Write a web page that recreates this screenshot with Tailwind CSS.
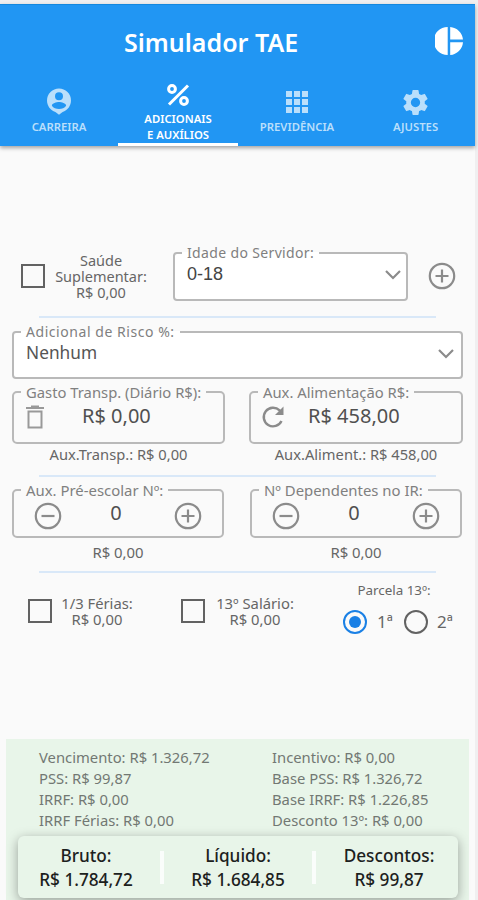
<!DOCTYPE html>
<html lang="pt-BR">
<head>
  <meta charset="UTF-8" />
  <meta name="viewport" content="width=device-width, initial-scale=1.0"/>
  <title>Simulador TAE</title>
  <script src="https://cdn.jsdelivr.net/npm/@tailwindcss/browser@4"></script>
</head>
<body class="w-[478px] h-[900px] overflow-hidden bg-[#f0eff0] pt-1 pr-[3px] font-['Noto_Sans','Open_Sans',sans-serif] text-[#666]">
<div class="h-[896px] bg-[#fafafa] flex flex-col">

  <header class="h-[142px] shrink-0 bg-[#2196f3] border-t border-[#1488df] shadow-[0_2px_4px_rgba(0,0,0,0.35)] text-white flex flex-col">
    <div class="h-[75px] flex items-center pl-[124px] pr-3 justify-between">
      <h1 class="text-[25px] font-semibold whitespace-nowrap">Simulador TAE</h1>
      <svg class="w-[28px] h-[28px] -mt-[3px]" viewBox="0 0 28 28" fill="currentColor">
        <path d="M12.700 0v28A14 14 0 0 1 12.700 0zM15.200 0A14 14 0 0 1 28 12.500H15.200zM15.200 15.200H28A14 14 0 0 1 15.200 28z"/>
      </svg>
    </div>
    <nav class="flex-1 grid grid-cols-[118px_120px_118px_119px] text-[11.3px] font-semibold text-center leading-4">
      <a class="flex flex-col items-center pt-1.5 text-[#badffb]">
        <svg class="w-[30px] h-[30px]" viewBox="0 0 24 24" fill="currentColor" fill-rule="evenodd"><path d="M12 2a9.600 9.600 0 0 0-9.600 9.600c0 4.300 2.800 7.900 6.700 9.100L12 23l2.900-2.300c3.900-1.200 6.700-4.800 6.700-9.100A9.600 9.600 0 0 0 12 2zM12 4.900a3.200 3.200 0 1 1 0 6.400 3.200 3.200 0 0 1 0-6.400zM6.300 15.800c0-2 3.800-3 5.700-3s5.700 1 5.700 3c-1.200 1.700-3.300 2.600-5.700 2.600s-4.500-.9-5.700-2.600z"/></svg>
        <span class="mt-[3px]">CARREIRA</span>
      </a>
      <a class="flex flex-col items-center pt-[3px] border-b-3 border-white leading-[15.500px]">
        <svg class="w-[24px] h-[24px]" viewBox="0 0 24 24" fill="none" stroke="currentColor" stroke-width="3"><circle cx="6" cy="6" r="3.400"/><circle cx="18" cy="18" r="3.400"/><path d="M22 2.500L3 21.500"/></svg>
        <span class="mt-[4px]">ADICIONAIS<br>E AUXÍLIOS</span>
      </a>
      <a class="flex flex-col items-center pt-1.5 text-[#badffb]">
        <svg class="w-[30px] h-[30px] mt-px" viewBox="0 0 30 30" fill="currentColor"><path d="M4 4h6v6H4zM12 4h6v6h-6zM20 4h6v6h-6zM4 12h6v6H4zM12 12h6v6h-6zM20 12h6v6h-6zM4 20h6v6H4zM12 20h6v6h-6zM20 20h6v6h-6z"/></svg>
        <span class="mt-[2px]">PREVIDÊNCIA</span>
      </a>
      <a class="flex flex-col items-center pt-[7px] text-[#badffb]">
        <svg class="w-[31px] h-[31px]" viewBox="0 0 24 24" fill="currentColor"><path d="M19.140 12.940c.04-.3.060-.61.060-.94s-.020-.64-.070-.94l2.030-1.580a.49.49 0 0 0 .12-.61l-1.920-3.320a.49.49 0 0 0-.59-.22l-2.390.96a7 7 0 0 0-1.620-.94l-.36-2.540a.48.48 0 0 0-.48-.41h-3.840a.48.48 0 0 0-.47.41l-.36 2.540a7 7 0 0 0-1.620.94l-2.390-.96a.48.48 0 0 0-.59.220L2.740 8.870a.48.48 0 0 0 .12.61l2.030 1.580a6 6 0 0 0 0 1.880l-2.030 1.580a.49.49 0 0 0-.12.61l1.920 3.320c.12.220.37.290.59.220l2.390-.96c.5.380 1.030.7 1.620.94l.36 2.540c.05.240.24.410.48.410h3.840c.24 0 .44-.17.470-.41l.36-2.540a7 7 0 0 0 1.620-.94l2.390.96c.22.080.47 0 .59-.22l1.920-3.320a.48.48 0 0 0-.12-.61zM12 15.600a3.600 3.600 0 1 1 0-7.200 3.600 3.600 0 0 1 0 7.200z"/></svg>
        <span class="mt-[1px]">AJUSTES</span>
      </a>
    </nav>
  </header>

  <main class="h-[593px] shrink-0 pt-[99px] pl-3">
    <!-- Saúde suplementar -->
    <div class="h-[71px] flex">
      <span class="shrink-0 ml-[9px] mt-[19px] w-6 h-6 border-2 border-[#626262]"></span>
      <p class="shrink-0 w-[112px] mt-[7px] text-center text-[14.500px] leading-4">Saúde<br>Suplementar:<br>R$ 0,00</p>
      <fieldset class="shrink-0 ml-[16px] w-[235px] h-[56px] border-2 border-[#b9b9b9] rounded bg-white pl-[7px] pr-[4px]">
        <legend class="px-[5px] h-4 text-[14px] leading-4 text-[#808080] tracking-[0.35px]">Idade do Servidor:</legend>
        <div class="flex justify-between pl-[5px] mt-[3px] font-['Liberation_Sans',sans-serif] text-[18px] leading-5 text-[#444]">
          <span>0-18</span>
          <svg class="w-[18px] h-5" viewBox="0 0 18 20" fill="none" stroke="#8b8b8b" stroke-width="2.200"><path d="M2 7l7 7 7-7"/></svg>
        </div>
      </fieldset>
      <svg class="shrink-0 w-[28px] h-[28px] ml-[20px] mt-[17px]" viewBox="0 0 28 28" fill="none" stroke="#8b8b8b" stroke-width="2.200"><circle cx="14" cy="14" r="12.200"/><path d="M14 7.500v13M7.500 14h13"/></svg>
    </div>
    <div class="ml-[27px] w-[397px] h-[2px] bg-[#d9e8f8]"></div>

    <!-- Adicional de risco -->
    <fieldset class="mt-[6px] w-[451px] h-[55px] border-2 border-[#b9b9b9] rounded bg-white pl-[7px] pr-[6px]">
      <legend class="px-[5px] h-4 text-[14px] leading-4 text-[#808080] tracking-[0.55px]">Adicional de Risco %:</legend>
      <div class="flex justify-between pl-[5px] mt-[3px] text-[17.300px] leading-5 text-[#555]">
        <span>Nenhum</span>
        <svg class="w-[18px] h-5" viewBox="0 0 18 20" fill="none" stroke="#8b8b8b" stroke-width="2.200"><path d="M2 7l7 7 7-7"/></svg>
      </div>
    </fieldset>

    <!-- Transporte e alimentação -->
    <div class="flex gap-[24px] mt-[5px]">
      <div class="w-[213px]">
        <fieldset class="h-[60px] border-2 border-[#b9b9b9] rounded-[5px] px-[7px]">
          <legend class="px-[5px] h-4 text-[14.800px] leading-4 text-[#808080]">Gasto Transp. (Diário R$):</legend>
          <div class="flex items-center h-[32px] pl-[5px] text-[20px] text-[#505050]">
            <svg class="w-[18px] h-[24px] mt-[2px]" viewBox="0 0 18 24" fill="none" stroke="#999" stroke-width="2"><path d="M0 3h18M5 1.500h8" /><path d="M2.500 6.500h13V22.500h-13z"/></svg>
            <span class="ml-[38px]">R$ 0,00</span>
          </div>
        </fieldset>
        <p class="text-center text-[14.700px] leading-5">Aux.Transp.: R$ 0,00</p>
      </div>
      <div class="w-[214px]">
        <fieldset class="h-[60px] border-2 border-[#b9b9b9] rounded-[5px] px-[7px]">
          <legend class="px-[5px] h-4 text-[14.800px] leading-4 text-[#808080]">Aux. Alimentação R$:</legend>
          <div class="flex items-center h-[32px] pl-[3px] text-[20px] text-[#505050]">
            <svg class="w-[24px] h-[24px] mt-[2px]" viewBox="0 0 24 24" fill="none" stroke="#8b8b8b" stroke-width="2.400"><path d="M20.500 16A9.300 9.300 0 1 1 18.600 5.400L21 8"/><path d="M22.500 1.500v8.500H14z" fill="#8b8b8b" stroke="none"/></svg>
            <span class="ml-[23px]">R$ 458,00</span>
          </div>
        </fieldset>
        <p class="text-center text-[14.700px] leading-5">Aux.Aliment.: R$ 458,00</p>
      </div>
    </div>
    <div class="ml-[27px] mt-[11px] w-[397px] h-[2px] bg-[#d9e8f8]"></div>

    <!-- Pré-escolar e dependentes -->
    <div class="flex gap-[26px] mt-[5px]">
      <div class="w-[212px]">
        <fieldset class="h-[56px] border-2 border-[#b9b9b9] rounded-[5px] px-[7px]">
          <legend class="px-[5px] h-4 text-[14.900px] leading-4 text-[#808080]">Aux. Pré-escolar Nº:</legend>
          <div class="flex justify-between pl-[13px] pr-[13px] text-[20px] leading-5 text-[#505050]">
            <svg class="w-[28px] h-[28px] mt-[4px]" viewBox="0 0 28 28" fill="none" stroke="#8b8b8b" stroke-width="2.200"><circle cx="14" cy="14" r="12.200"/><path d="M7.500 14h13"/></svg>
            <span class="mt-[5px] -ml-1">0</span>
            <svg class="w-[28px] h-[28px] mt-[4px]" viewBox="0 0 28 28" fill="none" stroke="#8b8b8b" stroke-width="2.200"><circle cx="14" cy="14" r="12.200"/><path d="M14 7.500v13M7.500 14h13"/></svg>
          </div>
        </fieldset>
        <p class="mt-[4px] text-center text-[14.900px] leading-5">R$ 0,00</p>
      </div>
      <div class="w-[212px]">
        <fieldset class="h-[56px] border-2 border-[#b9b9b9] rounded-[5px] px-[7px]">
          <legend class="px-[5px] h-4 text-[14.900px] leading-4 text-[#808080]">Nº Dependentes no IR:</legend>
          <div class="flex justify-between pl-[13px] pr-[13px] text-[20px] leading-5 text-[#505050]">
            <svg class="w-[28px] h-[28px] mt-[4px]" viewBox="0 0 28 28" fill="none" stroke="#8b8b8b" stroke-width="2.200"><circle cx="14" cy="14" r="12.200"/><path d="M7.500 14h13"/></svg>
            <span class="mt-[5px] -ml-1">0</span>
            <svg class="w-[28px] h-[28px] mt-[4px]" viewBox="0 0 28 28" fill="none" stroke="#8b8b8b" stroke-width="2.200"><circle cx="14" cy="14" r="12.200"/><path d="M14 7.500v13M7.500 14h13"/></svg>
          </div>
        </fieldset>
        <p class="mt-[4px] text-center text-[14.900px] leading-5">R$ 0,00</p>
      </div>
    </div>
    <div class="ml-[27px] mt-[9px] w-[397px] h-[2px] bg-[#d9e8f8]"></div>

    <!-- Férias e 13º -->
    <div class="flex text-[14.800px] leading-4 text-center">
      <span class="shrink-0 ml-[16px] mt-[26px] w-6 h-6 border-2 border-[#626262]"></span>
      <p class="ml-[7px] mt-[22px] w-[76px]">1/3 Férias:<br>R$ 0,00</p>
      <span class="shrink-0 ml-[46px] mt-[26px] w-6 h-6 border-2 border-[#626262]"></span>
      <p class="ml-[8px] mt-[22px] w-[84px]">13º Salário:<br>R$ 0,00</p>
      <div class="ml-[46px] mt-[9px] w-[114px]">
        <p class="text-[13.400px] -ml-[12px]">Parcela 13º:</p>
        <div class="flex items-center mt-[12px] h-6 text-[17px]">
          <span class="w-6 h-6 rounded-full border-[2.500px] border-[#1a80e5] flex items-center justify-center"><span class="w-3 h-3 rounded-full bg-[#1a80e5]"></span></span>
          <span class="ml-[10px] w-[18px] text-left">1ª</span>
          <span class="ml-[9px] w-6 h-6 rounded-full border-[2.500px] border-[#626262]"></span>
          <span class="ml-[9px]">2ª</span>
        </div>
      </div>
    </div>
  </main>

  <footer class="ml-[6px] w-[463px] flex-1 bg-[#e8f5e9] pt-[8px]">
    <div class="grid grid-cols-[233px_1fr] pl-[33px] text-[14.800px] leading-[21px] text-[#727873]">
      <span>Vencimento: R$ 1.326,72</span><span>Incentivo: R$ 0,00</span>
      <span>PSS: R$ 99,87</span><span>Base PSS: R$ 1.326,72</span>
      <span>IRRF: R$ 0,00</span><span>Base IRRF: R$ 1.226,85</span>
      <span>IRRF Férias: R$ 0,00</span><span>Desconto 13º: R$ 0,00</span>
    </div>
    <div class="ml-[12px] mt-[5px] w-[440px] h-[62px] rounded-[6px] bg-[#e8f5e9] shadow-[0_3px_12px_rgba(0,0,0,0.35)] flex items-center text-center text-[17.200px] leading-6 font-medium text-[#1c211d]">
      <p class="w-[136px] pt-[2px]">Bruto:<br>R$ 1.784,72</p>
      <span class="ml-[6px] w-[4px] h-[33px] bg-white/80"></span>
      <p class="w-[148px] pt-[2px]">Líquido:<br>R$ 1.684,85</p>
      <span class="w-[4px] h-[33px] bg-white/80"></span>
      <p class="flex-1 pl-[4px] pt-[2px]">Descontos:<br>R$ 99,87</p>
    </div>
  </footer>

</div>
</body>
</html>
